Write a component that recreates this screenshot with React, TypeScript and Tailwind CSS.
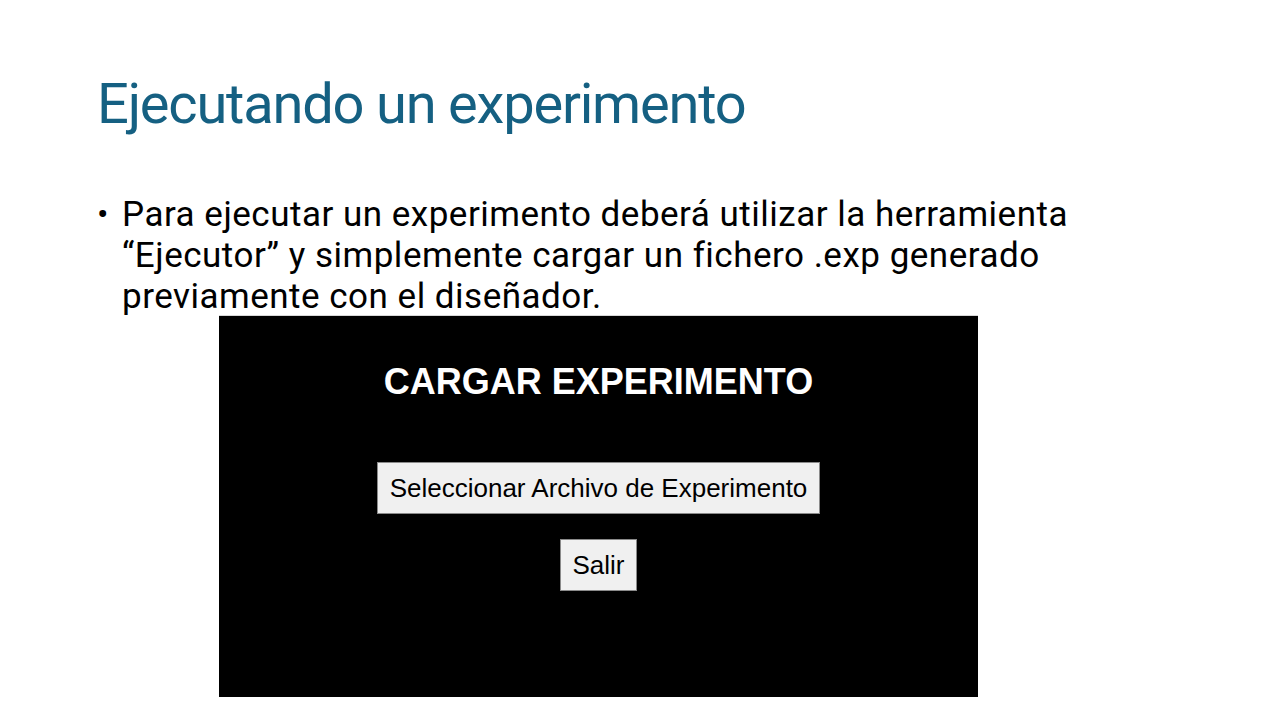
export default function App() {
  return (
    <div className="w-[1280px] h-[720px] bg-white overflow-hidden relative" style={{ fontFamily: 'Roboto, "Liberation Sans", sans-serif' }}>
      <div className="pl-[97px] pt-[70px]">
        <h1 className="text-[56px] leading-[68px] text-[#156082] tracking-[-1.2px]">Ejecutando un experimento</h1>
      </div>
      <div className="pl-[97px] pt-[56px] flex">
        <span className="w-[25px] text-[34px] leading-[41px] text-black">•</span>
        <p className="text-[35px] leading-[41px] text-black tracking-[0.5px] whitespace-nowrap">
          Para ejecutar un experimento deberá utilizar la herramienta
          <br />
          “Ejecutor” y simplemente cargar un fichero .exp generado
          <br />
          previamente con el diseñador.
        </p>
      </div>
      <div className="ml-[219px] mt-[-2px] w-[759px] h-[382px] bg-black border-t border-[#d8d8d8] flex flex-col items-center" style={{ fontFamily: '"Liberation Sans", Arial, sans-serif' }}>
        <div className="mt-[46px] text-white font-bold text-[36px] leading-[40px]">CARGAR EXPERIMENTO</div>
        <button className="mt-[60px] w-[443px] h-[52px] bg-[#f0f0f0] border border-[#8a8a8a] text-[26px] text-black">Seleccionar Archivo de Experimento</button>
        <button className="mt-[25px] w-[77px] h-[52px] bg-[#f0f0f0] border border-[#8a8a8a] text-[26px] text-black">Salir</button>
      </div>
    </div>
  );
}
